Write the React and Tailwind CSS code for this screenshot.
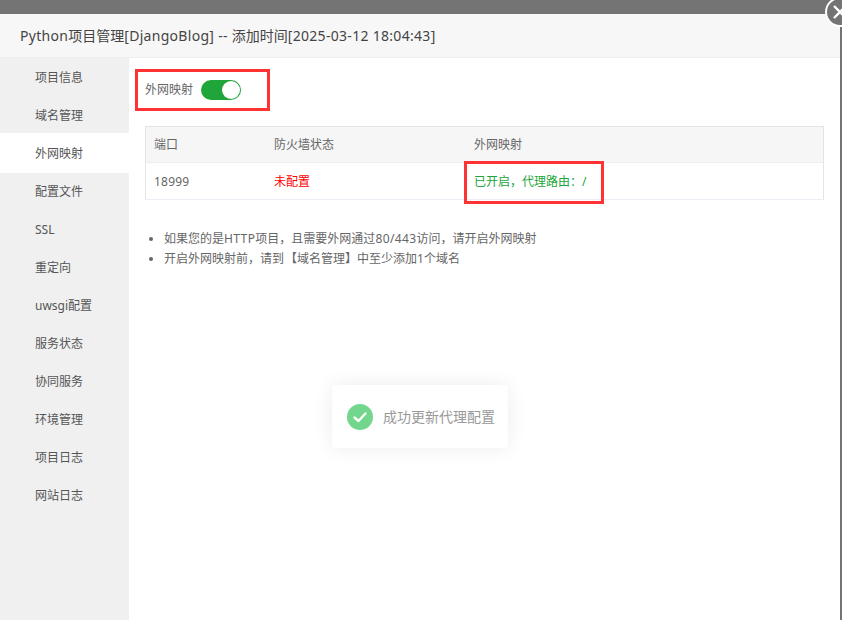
import React from 'react';

const menuItems = ['项目信息', '域名管理', '外网映射', '配置文件', 'SSL', '重定向', 'uwsgi配置', '服务状态', '协同服务', '环境管理', '项目日志', '网站日志'];

const App = () => {
  return (
    <div className="h-[620px] w-[842px] overflow-hidden bg-[#747474] pt-[14px] font-['Noto_Sans','Noto_Sans_CJK_SC',sans-serif] relative">
      {/* Modal */}
      <div className="flex h-[606px] w-[840px] flex-col rounded-tl-[2px] bg-white">
        <div className="flex h-[44px] items-center border-b border-[#eeeeee] bg-[#f7f7f7] pl-[20px] text-[14px] text-[#444444]">
          <span className="tracking-[0.3px]">Python</span>
          <span>项目管理</span>
          <span className="whitespace-pre tracking-[0.3px]">[DjangoBlog] -- </span>
          <span>添加时间</span>
          <span className="whitespace-pre tracking-[0.3px]">[2025-03-12 18:04:43]</span>
        </div>
        <div className="flex flex-1">
          {/* Sidebar */}
          <div className="w-[129px] bg-[#f0f0f0] text-[12px] text-[#555555]">
            {menuItems.map((item) => (
              <div
                key={item}
                className={
                  item === '外网映射'
                    ? 'relative -my-[1px] flex h-[40px] items-center bg-white pl-[35px] pt-[2px]'
                    : 'flex h-[38px] items-center pl-[35px] pt-[2px]'
                }
              >
                {item}
              </div>
            ))}
          </div>

          {/* Content */}
          <div className="relative flex-1 pl-[16px] pr-[16px] text-[12px] text-[#666666]">
            <div className="flex h-[40px] items-center mt-[12px]">
              <span>外网映射</span>
              <span className="ml-[8px] flex h-[20px] w-[40px] items-center justify-end rounded-full bg-[#20a53a] pr-[1px]">
                <span className="h-[18px] w-[18px] rounded-full bg-white" />
              </span>
            </div>

            <div className="mt-[16px] border border-[#e4e4e4] border-b-[#ebeef5]">
              <div className="flex h-[36px] items-center border-b border-[#ebeef5] bg-[#f6f6f6]">
                <div className="w-[128px] pl-[8px]">端口</div>
                <div className="w-[200px]">防火墙状态</div>
                <div>外网映射</div>
              </div>
              <div className="flex h-[36px] items-center pt-[2px]">
                <div className="w-[128px] pl-[8px] tracking-[0.2px]">18999</div>
                <div className="w-[200px] text-[#ff0000]">未配置</div>
                <div className="text-[#20a53a]">已开启，代理路由：/</div>
              </div>
            </div>

            <ul className="mt-[29px] list-disc pl-[19px] leading-[20px]">
              <li>
                如果您的是<span className="tracking-[0.4px]">HTTP</span>项目，且需要外网通过<span className="tracking-[0.4px]">80/443</span>访问，请开启外网映射
              </li>
              <li>
                开启外网映射前，请到<span className="ml-[1px]">【</span>域名管理】中至少添加1个域名
              </li>
            </ul>
          </div>
        </div>
      </div>

      {/* Red annotation boxes */}
      <div className="absolute left-[135px] top-[69px] h-[42px] w-[135px] border-[3px] border-[#ff3333]" />
      <div className="absolute left-[464px] top-[161px] h-[43px] w-[140px] border-[3px] border-[#ff3333]" />

      {/* Close button */}
      <div className="absolute left-[825px] top-[-3px] flex h-[30px] w-[30px] items-center justify-center rounded-full border-[2px] border-white bg-[#747474]">
        <svg width="16" height="16" viewBox="0 0 16 16" fill="none" stroke="white" strokeWidth="2.4">
          <path d="M2 2l12 12M14 2L2 14" />
        </svg>
      </div>

      {/* Toast */}
      <div className="absolute left-[332px] top-[385px] flex h-[63px] w-[176px] items-center rounded-[4px] bg-white pl-[15px] shadow-[0_0_20px_rgba(0,0,0,0.08)]">
        <svg width="26" height="26" viewBox="0 0 26 26">
          <circle cx="13" cy="13" r="13" fill="#72d78c" />
          <path d="M7.5 13.5l4 3.5 7-7.5" fill="none" stroke="white" strokeWidth="2.4" strokeLinecap="round" strokeLinejoin="round" />
        </svg>
        <span className="ml-[10px] text-[14px] text-[#999999]">成功更新代理配置</span>
      </div>
    </div>
  );
};

export default App;
